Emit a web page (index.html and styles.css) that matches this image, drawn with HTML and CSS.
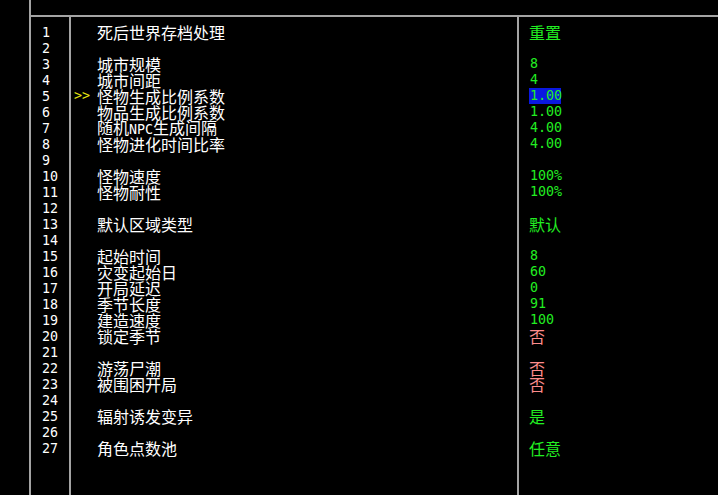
FILE: index.html
```html
<!DOCTYPE html>
<html lang="zh-CN">
<head>
<meta charset="utf-8">
<title>世界设置</title>
<link rel="stylesheet" href="styles.css">
</head>
<body>
<div class="screen">
  <div class="frame">
    <div class="topbar"></div>
    <div class="table">
      <div class="col col-num">
        <div class="row">1</div><div class="row">2</div><div class="row">3</div>
        <div class="row">4</div><div class="row">5</div><div class="row">6</div>
        <div class="row">7</div><div class="row">8</div><div class="row">9</div>
        <div class="row">10</div><div class="row">11</div><div class="row">12</div>
        <div class="row">13</div><div class="row">14</div><div class="row">15</div>
        <div class="row">16</div><div class="row">17</div><div class="row">18</div>
        <div class="row">19</div><div class="row">20</div><div class="row">21</div>
        <div class="row">22</div><div class="row">23</div><div class="row">24</div>
        <div class="row">25</div><div class="row">26</div><div class="row">27</div>
      </div>
      <div class="col col-label">
        <div class="row"><span class="mark"></span><span class="label">死后世界存档处理</span></div>
        <div class="row"></div>
        <div class="row"><span class="mark"></span><span class="label">城市规模</span></div>
        <div class="row"><span class="mark"></span><span class="label">城市间距</span></div>
        <div class="row"><span class="mark">&gt;&gt;</span><span class="label">怪物生成比例系数</span></div>
        <div class="row"><span class="mark"></span><span class="label">物品生成比例系数</span></div>
        <div class="row"><span class="mark"></span><span class="label">随机<span class="latin">NPC</span>生成间隔</span></div>
        <div class="row"><span class="mark"></span><span class="label">怪物进化时间比率</span></div>
        <div class="row"></div>
        <div class="row"><span class="mark"></span><span class="label">怪物速度</span></div>
        <div class="row"><span class="mark"></span><span class="label">怪物耐性</span></div>
        <div class="row"></div>
        <div class="row"><span class="mark"></span><span class="label">默认区域类型</span></div>
        <div class="row"></div>
        <div class="row"><span class="mark"></span><span class="label">起始时间</span></div>
        <div class="row"><span class="mark"></span><span class="label">灾变起始日</span></div>
        <div class="row"><span class="mark"></span><span class="label">开局延迟</span></div>
        <div class="row"><span class="mark"></span><span class="label">季节长度</span></div>
        <div class="row"><span class="mark"></span><span class="label">建造速度</span></div>
        <div class="row"><span class="mark"></span><span class="label">锁定季节</span></div>
        <div class="row"></div>
        <div class="row"><span class="mark"></span><span class="label">游荡尸潮</span></div>
        <div class="row"><span class="mark"></span><span class="label">被围困开局</span></div>
        <div class="row"></div>
        <div class="row"><span class="mark"></span><span class="label">辐射诱发变异</span></div>
        <div class="row"></div>
        <div class="row"><span class="mark"></span><span class="label">角色点数池</span></div>
      </div>
      <div class="col col-value">
        <div class="row"><span class="v cjk on">重置</span></div>
        <div class="row"></div>
        <div class="row"><span class="v num">8</span></div>
        <div class="row"><span class="v num">4</span></div>
        <div class="row"><span class="v num sel">1.00</span></div>
        <div class="row"><span class="v num">1.00</span></div>
        <div class="row"><span class="v num">4.00</span></div>
        <div class="row"><span class="v num">4.00</span></div>
        <div class="row"></div>
        <div class="row"><span class="v num">100%</span></div>
        <div class="row"><span class="v num">100%</span></div>
        <div class="row"></div>
        <div class="row"><span class="v cjk on">默认</span></div>
        <div class="row"></div>
        <div class="row"><span class="v num">8</span></div>
        <div class="row"><span class="v num">60</span></div>
        <div class="row"><span class="v num">0</span></div>
        <div class="row"><span class="v num">91</span></div>
        <div class="row"><span class="v num">100</span></div>
        <div class="row"><span class="v cjk off">否</span></div>
        <div class="row"></div>
        <div class="row"><span class="v cjk off">否</span></div>
        <div class="row"><span class="v cjk off">否</span></div>
        <div class="row"></div>
        <div class="row"><span class="v cjk on">是</span></div>
        <div class="row"></div>
        <div class="row"><span class="v cjk on">任意</span></div>
      </div>
    </div>
  </div>
</div>
</body>
</html>
```

FILE: styles.css
```css
html, body {
  margin: 0;
  padding: 0;
  background: #000;
}

body {
  width: 718px;
  height: 495px;
  overflow: hidden;
  color: #ffffff;
  font-family: "Noto Sans CJK SC", "Noto Sans", sans-serif;
}

.screen {
  display: flex;
  height: 495px;
  padding-left: 29px;
  box-sizing: border-box;
}

.frame {
  flex: 1;
  display: flex;
  flex-direction: column;
  border-left: 2px solid #a4a4a4;
}

.topbar {
  height: 15px;
  border-bottom: 2px solid #a4a4a4;
}

.table {
  flex: 1;
  display: flex;
}

.col {
  padding-top: 7px;
}

.row {
  height: 16px;
  line-height: 16px;
  white-space: nowrap;
  display: flex;
  align-items: center;
}

.col-num {
  width: 38px;
  border-right: 2px solid #a4a4a4;
}

.col-num .row {
  padding-left: 11px;
  padding-top: 1px;
  height: 15px;
  font-family: "DejaVu Sans Mono", monospace;
  font-size: 13.33px;
  color: #ffffff;
}

.col-label {
  width: 446px;
  border-right: 2px solid #a4a4a4;
}

.mark {
  width: 23px;
  padding-left: 3px;
  font-family: "DejaVu Sans Mono", monospace;
  font-size: 13.33px;
  color: #e8e810;
}

.label {
  font-size: 16px;
  line-height: 16px;
  color: #ffffff;
}

.latin {
  font-family: "DejaVu Sans Mono", monospace;
  font-size: 13.33px;
}

.col-value {
  flex: 1;
  padding-left: 10px;
}

.v {
  display: inline-block;
  height: 16px;
  line-height: 16px;
}

.num {
  font-family: "DejaVu Sans Mono", monospace;
  font-size: 13.33px;
  color: #22ee22;
  padding-left: 1px;
}

.cjk {
  font-size: 16px;
}

.on {
  color: #22ee22;
}

.off {
  color: #ff8c8c;
}

.sel {
  background: #0a18e0;
  width: 31px;
}
```
